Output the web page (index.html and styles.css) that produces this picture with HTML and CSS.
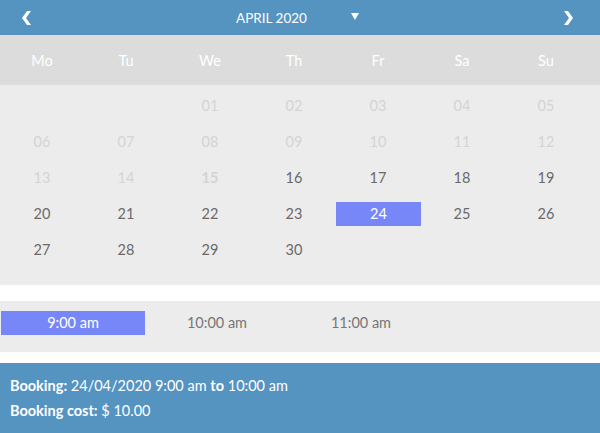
FILE: index.html
```html
<!DOCTYPE html>
<html lang="en">
<head>
  <meta charset="UTF-8" />
  <title>Booking</title>
  <link rel="stylesheet" href="styles.css">
</head>
<body>
  <div class="calendar">
    <div class="cal-header">
      <span class="nav-arrow">
        <svg width="9" height="14" viewBox="0 0 9 14"><polygon points="9,0 5,0 0,7 5,14 9,14 4,7" fill="#fff"/></svg>
      </span>
      <div class="month-select">
        <span class="month-label">APRIL 2020</span>
        <span class="caret"></span>
      </div>
      <span class="nav-arrow">
        <svg width="9" height="14" viewBox="0 0 9 14"><polygon points="0,0 4,0 9,7 4,14 0,14 5,7" fill="#fff"/></svg>
      </span>
    </div>

    <div class="weekdays">
      <div>Mo</div><div>Tu</div><div>We</div><div>Th</div><div>Fr</div><div>Sa</div><div>Su</div>
    </div>

    <div class="days">
      <div class="day empty"></div>
      <div class="day empty"></div>
      <div class="day past">01</div>
      <div class="day past">02</div>
      <div class="day past">03</div>
      <div class="day past">04</div>
      <div class="day past">05</div>

      <div class="day past">06</div>
      <div class="day past">07</div>
      <div class="day past">08</div>
      <div class="day past">09</div>
      <div class="day past">10</div>
      <div class="day past">11</div>
      <div class="day past">12</div>

      <div class="day past">13</div>
      <div class="day past">14</div>
      <div class="day past today">15</div>
      <div class="day">16</div>
      <div class="day">17</div>
      <div class="day">18</div>
      <div class="day">19</div>

      <div class="day">20</div>
      <div class="day">21</div>
      <div class="day">22</div>
      <div class="day">23</div>
      <div class="day selected">24</div>
      <div class="day">25</div>
      <div class="day">26</div>

      <div class="day">27</div>
      <div class="day">28</div>
      <div class="day">29</div>
      <div class="day">30</div>
    </div>
  </div>

  <div class="slots">
    <div class="slot selected">9:00 am</div>
    <div class="slot">10:00 am</div>
    <div class="slot">11:00 am</div>
  </div>

  <div class="summary">
    <div><b>Booking:</b> 24/04/2020 9:00 am <b>to</b> 10:00 am</div>
    <div><b>Booking cost:</b> $ 10.00</div>
  </div>
</body>
</html>
```

FILE: styles.css
```css
body {
  margin: 0;
  font-family: 'Lato', sans-serif;
  font-size: 14.5px;
  color: #666;
  background: #fff;
}

.cal-header {
  height: 35px;
  background: #5593c1;
  color: white;
  display: flex;
  align-items: center;
  justify-content: space-between;
  padding: 0 27px 0 22px;
}

.nav-arrow {
  display: flex;
  width: 9px;
  height: 14px;
}

.month-select {
  display: flex;
  align-items: center;
  gap: 44px;
  font-size: 13.5px;
}

.caret {
  width: 0;
  height: 0;
  border-left: 4px solid transparent;
  border-right: 4px solid transparent;
  border-top: 7px solid white;
  margin-top: -2px;
}

.weekdays {
  height: 50px;
  background: #dcdcdc;
  color: white;
  display: grid;
  grid-template-columns: repeat(7, 84px);
  align-items: center;
  text-align: center;
}

.days {
  background: #ececec;
  display: grid;
  grid-template-columns: repeat(7, 84px);
  padding: 3px 0 17px;
}

.day {
  height: 24px;
  line-height: 24px;
  margin: 6px 0;
  text-align: center;
  color: #6a6a6a;
}

.day.past {
  color: #d4d4d4;
}

.day.today {
  font-weight: bold;
}

.day.selected {
  background: #7887f8;
  color: white;
  width: 85px;
}

.slots {
  margin-top: 16px;
  background: #ececec;
  display: flex;
  padding: 10px 1px 17px;
}

.slot {
  width: 144px;
  height: 24px;
  line-height: 24px;
  text-align: center;
  color: #777;
}

.slot.selected {
  background: #7887f8;
  color: white;
}

.summary {
  margin-top: 11px;
  height: 70px;
  box-sizing: border-box;
  background: #5593c1;
  color: white;
  padding: 10px 10px 0;
  line-height: 25px;
}
```
